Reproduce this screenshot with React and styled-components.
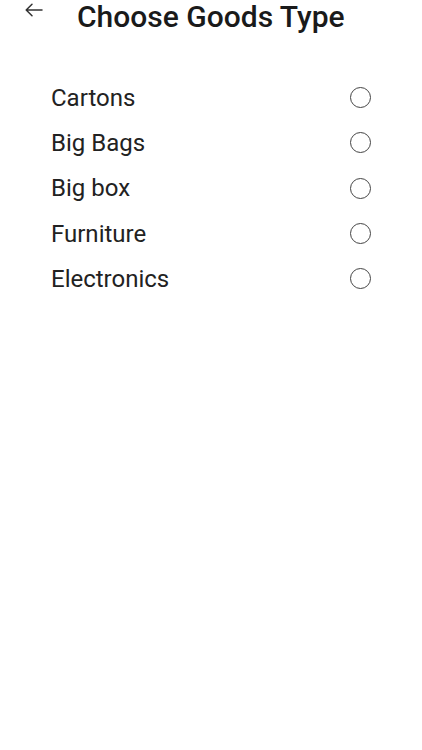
import React, { useState } from "react";
import styled, { createGlobalStyle } from "styled-components";

const GlobalStyle = createGlobalStyle`
  html, body {
    margin: 0;
    padding: 0;
    background: #fff;
  }
  body {
    font-family: Roboto, "Noto Sans", sans-serif;
    color: #1c1c1c;
  }
`;

const goods = ["Cartons", "Big Bags", "Big box", "Furniture", "Electronics"];

const App = () => {
  const [selected, setSelected] = useState(null);

  return (
    <Screen>
      <GlobalStyle />
      <Header>
        <BackButton aria-label="Back">
          <svg width="18" height="14" viewBox="0 0 18 14" fill="none">
            <path
              d="M17 7H1.5M7 1.2L1.2 7L7 12.8"
              stroke="#333"
              strokeWidth="1.5"
              strokeLinecap="round"
              strokeLinejoin="round"
            />
          </svg>
        </BackButton>
        <Title>Choose Goods Type</Title>
      </Header>
      <List>
        {goods.map((name) => (
          <Row key={name} onClick={() => setSelected(name)}>
            <Label>{name}</Label>
            <Radio checked={selected === name} />
          </Row>
        ))}
      </List>
    </Screen>
  );
};

export default App;

const Screen = styled.div`
  width: 422px;
  min-height: 750px;
  background: #fff;
`;

const Header = styled.div`
  display: flex;
  align-items: flex-start;
  padding: 0 0 0 25px;
  height: 44px;
`;

const BackButton = styled.button`
  border: none;
  background: none;
  padding: 0;
  margin-top: 3px;
  width: 18px;
  height: 14px;
  display: flex;
  cursor: pointer;
`;

const Title = styled.h1`
  margin: 0 0 0 34px;
  font-size: 30px;
  font-weight: 500;
  line-height: 34px;
  color: #1a1a1a;
`;

const List = styled.div`
  display: flex;
  flex-direction: column;
  padding: 31px 51px 0 51px;
`;

const Row = styled.div`
  display: flex;
  align-items: center;
  justify-content: space-between;
  height: 45.3px;
  cursor: pointer;
`;

const Label = styled.span`
  font-size: 24px;
  font-weight: 400;
  color: #222;
`;

const Radio = styled.span`
  width: 19px;
  height: 19px;
  border-radius: 50%;
  border: 1.6px solid #444;
  position: relative;
  &::after {
    content: "";
    display: ${(p) => (p.checked ? "block" : "none")};
    position: absolute;
    inset: 4px;
    border-radius: 50%;
    background: #444;
  }
`;
